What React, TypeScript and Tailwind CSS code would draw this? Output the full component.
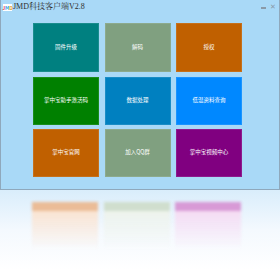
import React from "react";

type Tile = { label: string; color: string };

const tiles: Tile[] = [
  { label: "固件升级", color: "bg-[#008080]" },
  { label: "解码", color: "bg-[#80a080]" },
  { label: "授权", color: "bg-[#c06000]" },
  { label: "掌中宝助手激活码", color: "bg-[#008000]" },
  { label: "数据处理", color: "bg-[#0080c0]" },
  { label: "低温资料查询", color: "bg-[#0088ff]" },
  { label: "掌中宝官网", color: "bg-[#c06000]" },
  { label: "加入QQ群", color: "bg-[#80a080]" },
  { label: "掌中宝视频中心", color: "bg-[#800080]" },
];

// reflection of the last row: strong band near the edge, then a fade
const reflections = [
  { band: "bg-[#ebb68c]", fade: "from-[#fbe4d2]" },
  { band: "bg-[#cddbc9]", fade: "from-[#eef3ec]" },
  { band: "bg-[#d690d2]", fade: "from-[#f6dcf3]" },
];

function Logo() {
  return (
    <span className="flex h-[7px] w-[9px] items-center justify-center bg-white text-[5px] font-bold leading-none">
      <span className="text-[#e04040]">J</span>
      <span className="text-[#30a0e0]">M</span>
      <span className="text-[#e0a020]">D</span>
    </span>
  );
}

export default function App() {
  return (
    <div className="flex h-[270px] w-[280px] flex-col bg-white font-['Noto_Sans_CJK_SC',sans-serif]">
      <div className="flex h-[190px] flex-col border-x border-b border-[#8fa8bc] bg-[#a9d9f7]">
        <div className="flex h-[22px] items-start justify-between pl-[2px] pr-[3px] pt-[2px]">
          <div className="flex items-center gap-[1px]">
            <Logo />
            <span className="font-['Liberation_Serif','Noto_Serif_CJK_SC','Noto_Sans_CJK_SC',serif] text-[8px] leading-[10px] text-[#303030]">
              JMD科技客户端V2.8
            </span>
          </div>
          <div className="flex items-center gap-[4px] pt-[1px]">
            <span className="mt-[3px] h-[2px] w-[5px] bg-[#8a9aa8]" />
            <span className="text-[7px] leading-[7px] text-[#8a9aa8]">✕</span>
          </div>
        </div>
        <div className="grid grid-cols-[66px_66px_66px] gap-x-[5.5px] gap-y-[4.5px] pl-[32px] pt-[1px]">
          {tiles.map((t, i) => (
            <div
              key={t.label}
              className={`flex items-center justify-center border border-white/10 ${t.color} ${
                i < 3 ? "h-[49px]" : "h-[48px]"
              }`}
            >
              <span className="text-[5.5px] leading-none text-white">{t.label}</span>
            </div>
          ))}
        </div>
      </div>
      <div className="flex-1 bg-gradient-to-b from-[#d9edfb] via-[#f4f9fe] to-white">
        <div className="grid grid-cols-[66px_66px_66px] gap-x-[5.5px] pl-[32px] pt-[12px]">
          {reflections.map((r) => (
            <div key={r.band} className="flex h-[48px] flex-col blur-[1.5px]">
              <div className={`h-[9px] ${r.band} opacity-90`} />
              <div className={`flex-1 bg-gradient-to-b ${r.fade} to-transparent`} />
            </div>
          ))}
        </div>
      </div>
    </div>
  );
}
